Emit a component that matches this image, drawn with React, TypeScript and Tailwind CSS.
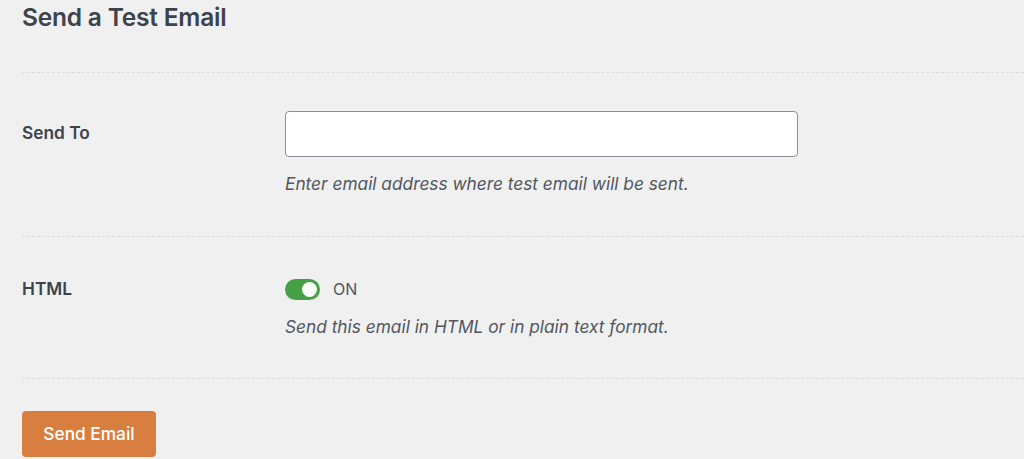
import React, { useState } from "react";

const font = { fontFamily: "Inter, 'Liberation Sans', sans-serif" };

export default function App() {
  const [email, setEmail] = useState("");
  const [html, setHtml] = useState(true);

  return (
    <div
      className="min-h-[459px] w-full bg-[#f0f0f1] pl-[22px] text-[#3c434a]"
      style={font}
    >
      <h1 className="pt-[3px] text-[24.5px] leading-[28px] font-semibold text-[#3c434a] tracking-[-0.2px]">
        Send a Test Email
      </h1>

      <div className="mt-[41px] border-t border-dashed border-[#dcdcde]" />

      <div className="flex pt-[38px] pb-[40px]">
        <div className="w-[263px] pt-[10px] text-[17.3px] leading-[24px] font-semibold text-[#3c434a]">
          Send To
        </div>
        <div className="flex flex-col">
          <input
            type="email"
            value={email}
            onChange={(e) => setEmail(e.target.value)}
            className="h-[46px] w-[513px] rounded-[4px] border border-[#8c8f94] bg-white px-2 text-[16px] outline-none"
          />
          <p className="mt-[15px] text-[17.3px] leading-[24px] italic text-[#50575e]">
            Enter email address where test email will be sent.
          </p>
        </div>
      </div>

      <div className="border-t border-dashed border-[#dcdcde]" />

      <div className="flex pt-[40px] pb-[39px]">
        <div className="w-[263px] text-[17.3px] leading-[24px] font-semibold text-[#3c434a]">
          HTML
        </div>
        <div className="flex flex-col">
          <div className="flex items-center gap-[13px]">
            <button
              onClick={() => setHtml(!html)}
              className={`flex h-[21px] w-[35px] items-center rounded-full px-[3px] ${
                html ? "justify-end bg-[#46a046]" : "justify-start bg-[#a7aaad]"
              }`}
            >
              <span className="h-[15px] w-[15px] rounded-full bg-white" />
            </button>
            <span className="text-[16px] leading-[24px] text-[#50575e]">
              {html ? "ON" : "OFF"}
            </span>
          </div>
          <p className="mt-[14px] text-[17.3px] leading-[24px] italic text-[#50575e]">
            Send this email in HTML or in plain text format.
          </p>
        </div>
      </div>

      <div className="border-t border-dashed border-[#dcdcde]" />

      <div className="pt-[32px]">
        <button className="h-[46px] w-[134px] rounded-[4px] bg-[#d87f40] text-[17.3px] font-medium text-white">
          Send Email
        </button>
      </div>
    </div>
  );
}
